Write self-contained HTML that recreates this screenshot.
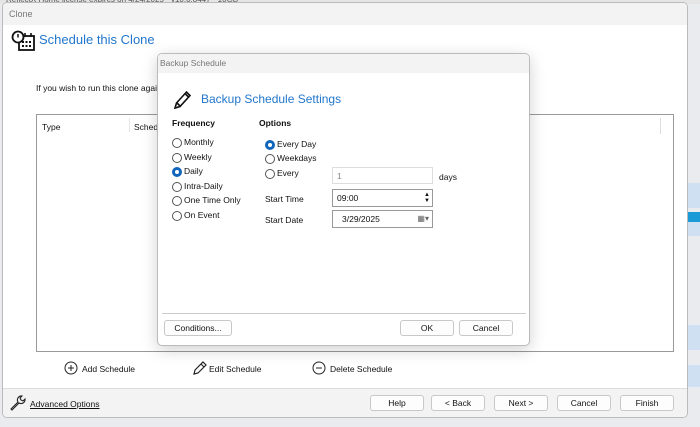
<!DOCTYPE html>
<html><head><meta charset="utf-8"><style>
*{box-sizing:border-box;margin:0;padding:0}
body{width:700px;height:427px;overflow:hidden;background:#e9ebee;font-family:"Liberation Sans",sans-serif;font-size:8.5px;color:#111;position:relative}
.abs{position:absolute}
.btn{position:absolute;background:#fdfdfd;border:1px solid #c8c8c8;border-radius:3px;text-align:center;font-size:8.5px;line-height:14px}
.radio{position:absolute;font-size:8.5px;line-height:11px;padding-left:12px}
.radio:before{content:"";box-sizing:border-box;position:absolute;left:0;top:1px;width:10px;height:10px;border:1px solid #555;border-radius:50%;background:#fff}
.radio.on:before{border:3px solid #1166bb}
.field{position:absolute;background:#fff;border:1px solid #999;font-size:8.5px;line-height:16px;padding-left:4px}
</style></head><body>
<div class="abs" style="left:0;top:0;width:700px;height:4px;background:#e5e5e5"></div>
<div class="abs" style="left:6px;top:-5px;font-size:8px;color:#555">ReflectX Home license expires on 4/24/2025 · v10.0.8447 · 10GB</div>
<div class="abs" style="left:688px;top:183px;width:12px;height:25px;background:#cfe0f3"></div>
<div class="abs" style="left:688px;top:212px;width:12px;height:10px;background:#1a9ad6"></div>
<div class="abs" style="left:688px;top:222px;width:12px;height:14px;background:#cfe0f3"></div>
<div class="abs" style="left:688px;top:325px;width:12px;height:25px;background:#cfe0f3"></div>
<div class="abs" style="left:688px;top:365px;width:12px;height:22px;background:#cfe0f3"></div>
<div class="abs" style="left:2px;top:2px;width:686px;height:416px;background:#fff;border:1px solid #bbb;border-radius:5px;overflow:hidden">
 <div class="abs" style="left:0;top:0;width:686px;height:22px;background:#f3f3f3;color:#777;font-size:9px;line-height:22px;padding-left:6px">Clone</div>
 <svg class="abs" style="left:8px;top:26px" width="26" height="24" viewBox="0 0 26 24"><rect x="8" y="7" width="15" height="14" fill="#fff" stroke="#111" stroke-width="1.8"/><path d="M14 4v4M20 4v4" stroke="#111" stroke-width="1.6"/><g fill="#111"><rect x="11" y="12" width="2" height="2"/><rect x="14.5" y="12" width="2" height="2"/><rect x="18" y="12" width="2" height="2"/><rect x="11" y="16" width="2" height="2"/><rect x="14.5" y="16" width="2" height="2"/><rect x="18" y="16" width="2" height="2"/></g><circle cx="7" cy="8" r="5.5" fill="#fff" stroke="#111" stroke-width="1.8"/><path d="M7 5v3.5" stroke="#111" stroke-width="1.5"/></svg>
 <div class="abs" style="left:36px;top:29px;font-size:13px;color:#2277cc">Schedule this Clone</div>
 <div class="abs" style="left:33px;top:80px;font-size:8.5px">If you wish to run this clone again at a scheduled time, add a schedule below</div>
 <div class="abs" style="left:33px;top:111px;width:638px;height:238px;border:1px solid #999;background:#fff">
  <div class="abs" style="left:5px;top:7px">Type</div>
  <div class="abs" style="left:92px;top:3px;height:14px;border-left:1px solid #e5e5e5"></div>
  <div class="abs" style="left:97px;top:7px">Schedule</div>
  <div class="abs" style="left:623px;top:3px;height:16px;border-left:1px solid #ddd"></div>
 </div>
 <svg class="abs" style="left:61px;top:358px" width="14" height="14"><circle cx="7" cy="7" r="6" fill="none" stroke="#222"/><path d="M7 4v6M4 7h6" stroke="#222"/></svg>
 <div class="abs" style="left:79px;top:361px">Add Schedule</div>
 <svg class="abs" style="left:188px;top:357px" width="16" height="16"><path d="M3 14l1-4 8-8 3 3-8 8z M10 4l3 3" fill="none" stroke="#222" stroke-width="1.2"/></svg>
 <div class="abs" style="left:206px;top:361px">Edit Schedule</div>
 <svg class="abs" style="left:309px;top:358px" width="14" height="14"><circle cx="7" cy="7" r="6" fill="none" stroke="#222"/><path d="M4 7h6" stroke="#222"/></svg>
 <div class="abs" style="left:327px;top:361px">Delete Schedule</div>
 <div class="abs" style="left:0;top:385px;width:686px;height:31px;background:#f3f3f3;border-top:1px solid #ddd"></div>
 <svg class="abs" style="left:5px;top:391px" width="18" height="18"><path d="M3 15l7-7a4 4 0 0 1 4-6l-2 2 1 2 2 1 2-2a4 4 0 0 1-6 4l-7 7z" fill="none" stroke="#222" stroke-width="1.1"/></svg>
 <div class="abs" style="left:27px;top:396px;text-decoration:underline">Advanced Options</div>
 <div class="btn" style="left:367px;top:392px;width:54px;height:16px">Help</div>
 <div class="btn" style="left:428px;top:392px;width:54px;height:16px">&lt; Back</div>
 <div class="btn" style="left:491px;top:392px;width:54px;height:16px">Next &gt;</div>
 <div class="btn" style="left:554px;top:392px;width:54px;height:16px">Cancel</div>
 <div class="btn" style="left:617px;top:392px;width:54px;height:16px">Finish</div>
</div>
<div class="abs" style="left:157px;top:53px;width:373px;height:293px;background:#fff;border:1px solid #bbb;border-radius:5px;overflow:hidden;box-shadow:0 4px 16px rgba(0,0,0,.18)">
 <div class="abs" style="left:0;top:0;width:373px;height:19px;background:#f3f3f3;color:#777;font-size:8.5px;line-height:19px;padding-left:2px">Backup Schedule</div>
 <svg class="abs" style="left:15px;top:34px" width="20" height="22"><path d="M2 20l1.5-5 10-11 3.5 3.5-10 11z M12 5.5l3.5 3.5 M4 15l3 3" fill="none" stroke="#111" stroke-width="1.6"/></svg>
 <div class="abs" style="left:43px;top:38px;font-size:12px;color:#2277cc">Backup Schedule Settings</div>
 <div class="abs" style="left:14px;top:64px;font-weight:bold">Frequency</div>
 <div class="abs" style="left:101px;top:64px;font-weight:bold">Options</div>
 <div class="radio" style="left:14px;top:83px">Monthly</div>
 <div class="radio" style="left:14px;top:98px">Weekly</div>
 <div class="radio on" style="left:14px;top:112px">Daily</div>
 <div class="radio" style="left:14px;top:127px">Intra-Daily</div>
 <div class="radio" style="left:14px;top:141px">One Time Only</div>
 <div class="radio" style="left:14px;top:156px">On Event</div>
 <div class="radio on" style="left:107px;top:85px">Every Day</div>
 <div class="radio" style="left:107px;top:99px">Weekdays</div>
 <div class="radio" style="left:107px;top:114px">Every</div>
 <div class="field" style="left:174px;top:113px;width:101px;height:17px;border-color:#ddd;color:#888">1</div>
 <div class="abs" style="left:281px;top:118px">days</div>
 <div class="abs" style="left:107px;top:140px">Start Time</div>
 <div class="field" style="left:174px;top:135px;width:101px;height:18px">09:00<span style="position:absolute;right:2px;top:2px;font-size:6px;line-height:6px">▲<br>▼</span></div>
 <div class="abs" style="left:107px;top:161px">Start Date</div>
 <div class="field" style="left:174px;top:156px;width:101px;height:18px;padding-left:9px">3/29/2025<span style="position:absolute;right:3px;top:0;font-size:8px;color:#666">▦▾</span></div>
 <div class="abs" style="left:4px;top:259px;width:364px;border-top:1px solid #ccc"></div>
 <div class="btn" style="left:6px;top:266px;width:68px;height:16px">Conditions...</div>
 <div class="btn" style="left:242px;top:266px;width:54px;height:16px">OK</div>
 <div class="btn" style="left:301px;top:266px;width:54px;height:16px">Cancel</div>
</div>
</body></html>
